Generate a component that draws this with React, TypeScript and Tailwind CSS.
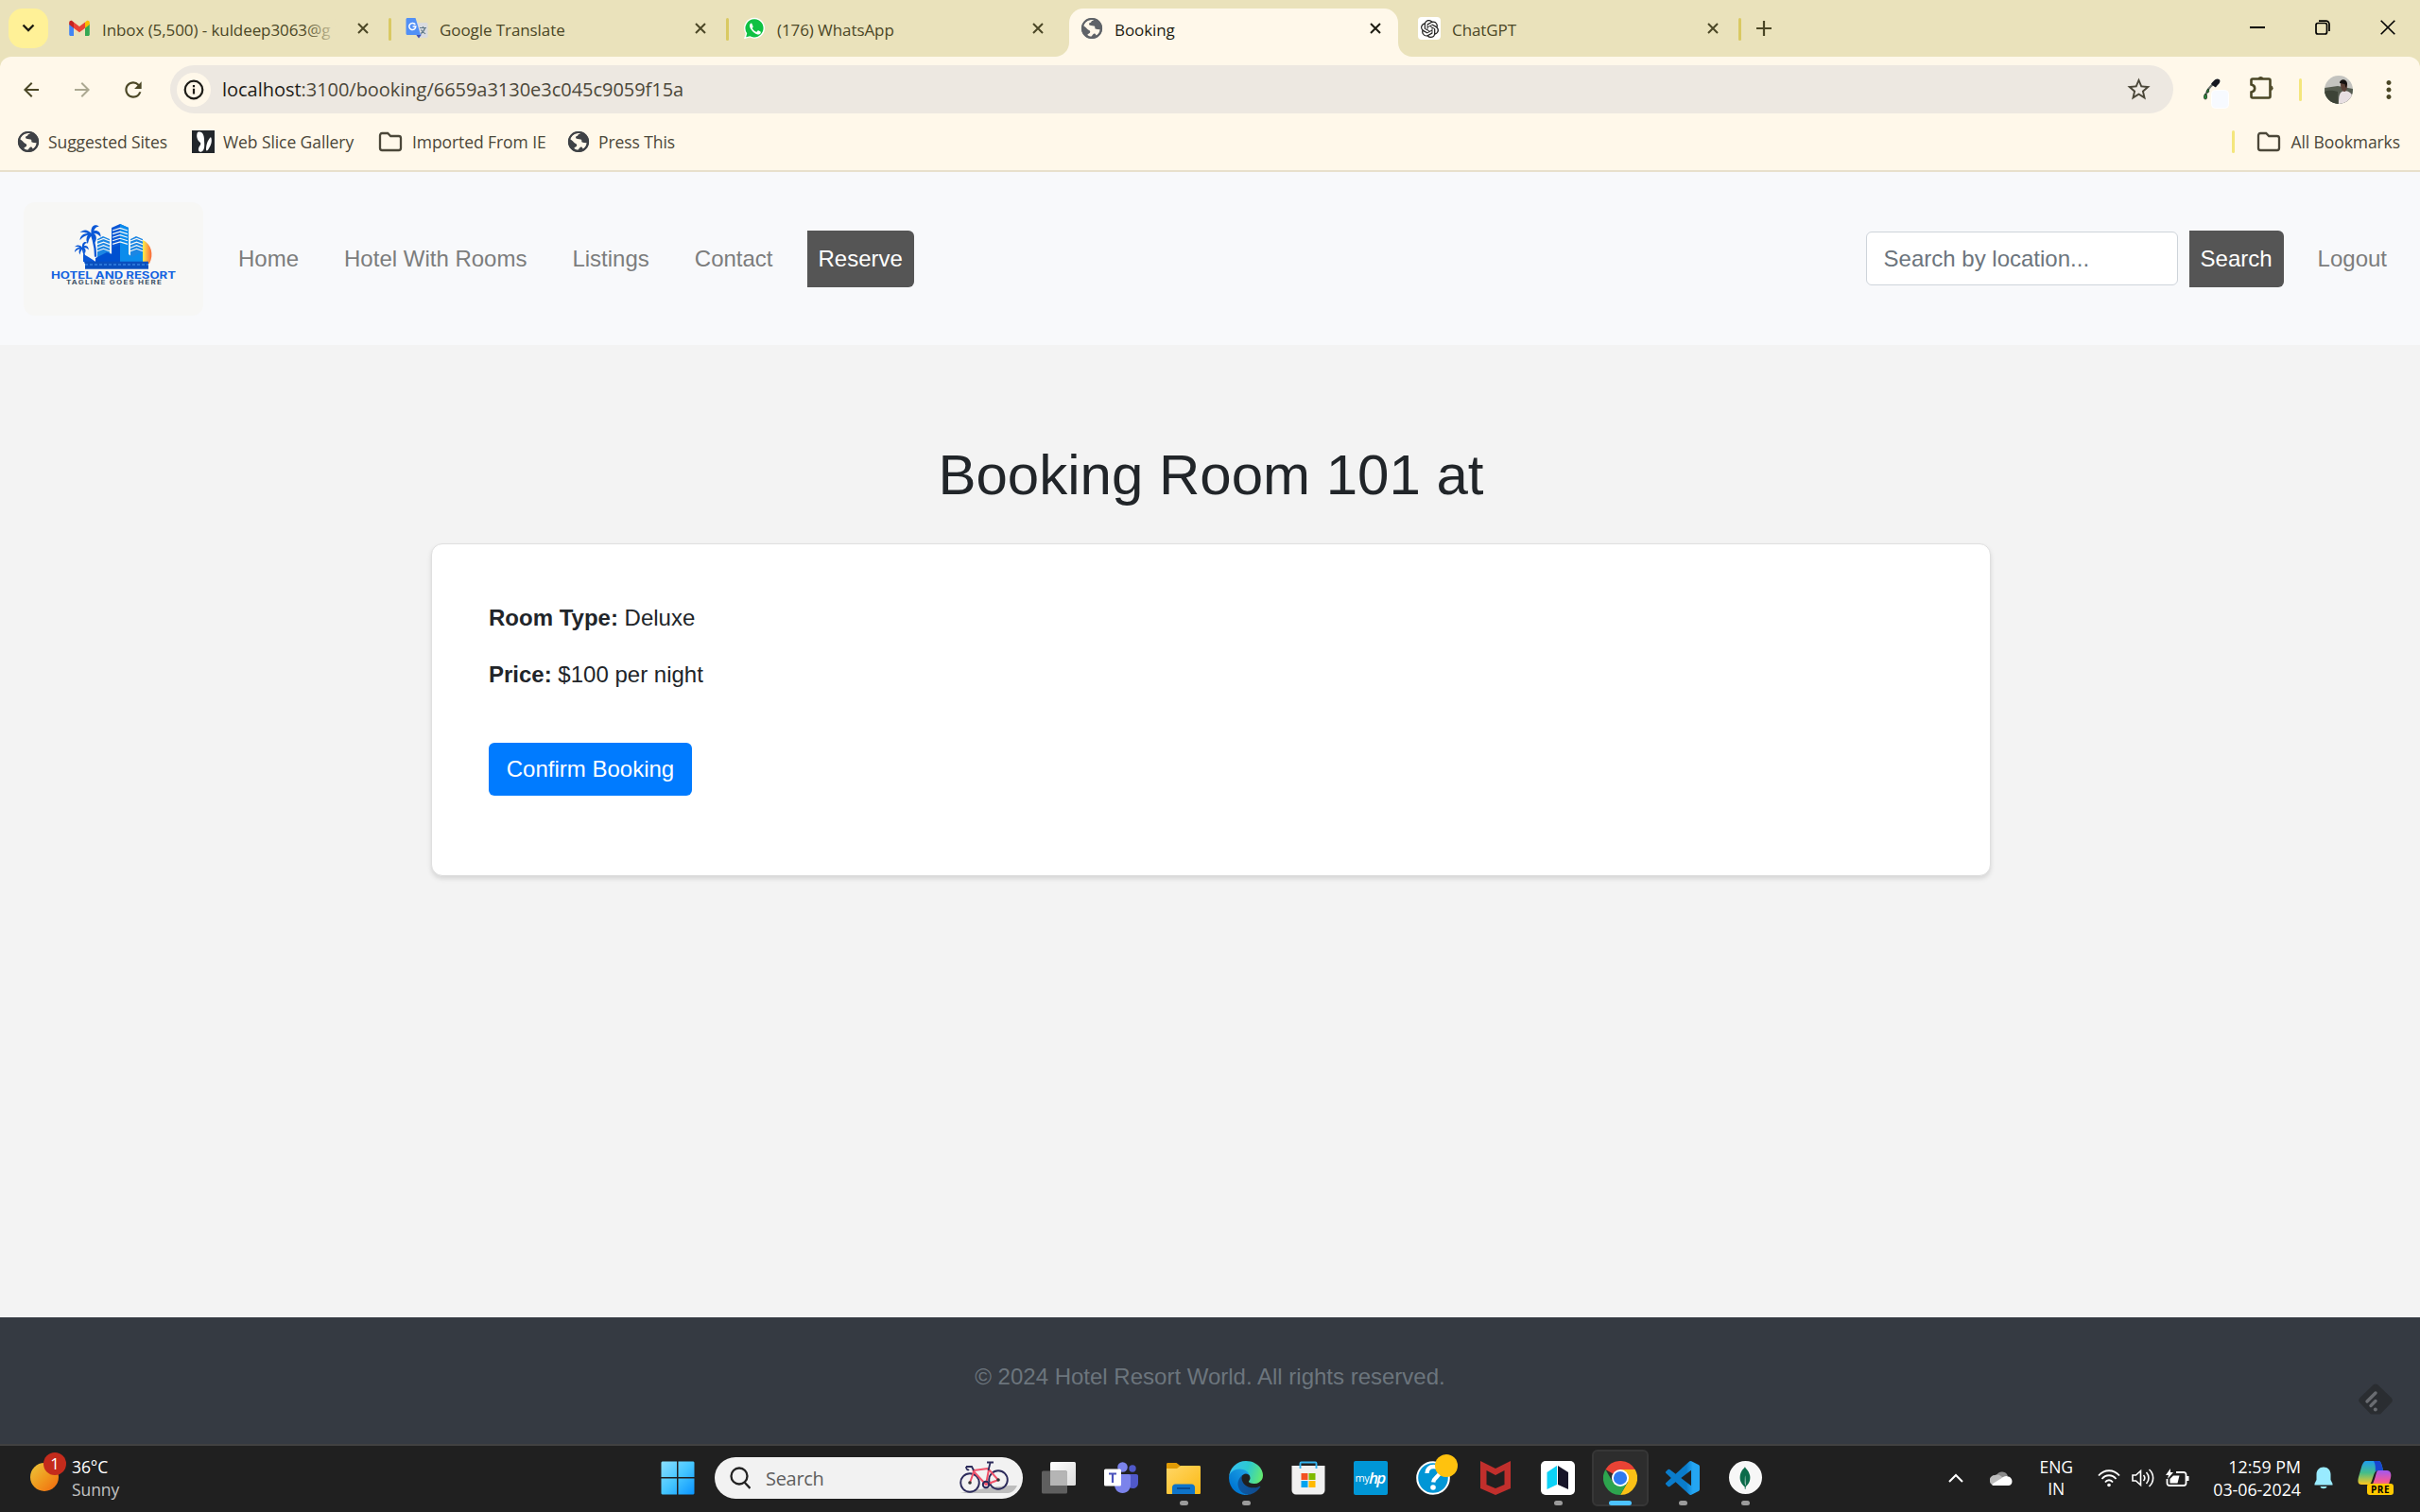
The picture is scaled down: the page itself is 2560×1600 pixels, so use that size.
import React from "react";
import { SiOpenai, SiMongodb } from "react-icons/si";
import {
  MdArrowBack,
  MdArrowForward,
  MdRefresh,
  MdStarBorder,
  MdMoreVert,
} from "react-icons/md";

/* ---------- Browser icons ---------- */

function Globe({ color, land, size = 24 }: { color: string; land: string; size?: number }) {
  return (
    <svg width={size} height={size} viewBox="0 0 24 24" className="shrink-0">
      <circle cx="12" cy="12" r="11" fill={color} />
      <path
        d="M13 3.2c-1.4.4-2.6 1-2.6 2.2 0 1-1.8.8-2 2-.1 1.300.9 1.700 2.200 1.700h3.200c1.200 0 1.400 1 1.400 2 0 1.300 1.400 1 2.600 1h2.900c.2 2.500-.8 5-2.900 6.600-.9-.6-.9-1.700-2.100-1.700-1.200 0-1.600.9-2.600 2.900-.2.500-.8.800-1.500.700-1-.1-2.300-.4-3.300-1 .2-1.500 1.700-1.500 2.300-2.600.5-1 0-2.200-1.200-2.600-1.500-.5-2.600-1.200-3.600-2.300L3 10.500c.3-2.500 1.700-4.700 3.800-6 1.900-1.200 4.100-1.600 6.200-1.300z"
        fill={land}
        transform="rotate(8 12 12)"
      />
      <circle cx="12" cy="12" r="10.200" fill="none" stroke={color} strokeWidth="1.800" />
    </svg>
  );
}

function GmailIcon() {
  return (
    <svg width="24" height="24" viewBox="0 0 24 24" className="shrink-0">
      <path d="M1.200 7v11.500c0 .900.600 1.500 1.500 1.500H6V10z" fill="#4285f4" />
      <path d="M22.800 7v11.500c0 .900-.600 1.500-1.500 1.500H18V10z" fill="#34a853" />
      <path d="M18 5.500 19.500 4.200c1.300-1 3.300-.2 3.300 1.700V8L18 11.700z" fill="#fbbc04" />
      <path d="M6 5.500 12 10l6-4.500v6.200l-6 4.500-6-4.500z" fill="#ea4335" />
      <path d="M6 5.500 4.500 4.200C3.200 3.200 1.200 4 1.200 5.900V8L6 11.700z" fill="#c5221f" />
    </svg>
  );
}

function TranslateIcon() {
  return (
    <svg width="24" height="24" viewBox="0 0 24 24" className="shrink-0">
      <path d="M11 6h11c.8 0 1.500.7 1.500 1.500v13c0 .8-.7 1.500-1.500 1.500h-7.500z" fill="#dadce0" />
      <path d="M15 11.500h7M18.500 10v1.500M20.500 11.500c-.7 3-2.600 5-4.500 6M16.500 13.500c1 2 2.600 3.400 4.600 4.300" stroke="#607988" strokeWidth="1.200" fill="none" />
      <path d="m11 18.500 6 0-3 4z" fill="#3f51b5" />
      <path d="M2 1h8.500L16 19H2C1.200 19 .5 18.300.5 17.500v-15C.5 1.700 1.200 1 2 1z" fill="#5290f5" />
      <path d="M10.300 8.100A3.500 3.500 0 1 0 10.800 10H7.600" stroke="#fff" strokeWidth="1.500" fill="none" />
    </svg>
  );
}

function WhatsAppIcon() {
  return (
    <svg width="24" height="24" viewBox="0 0 24 24" className="shrink-0">
      <path d="M12.200.8a11 11 0 0 0-9.500 16.600L1 23.200l6-1.600A11 11 0 1 0 12.200.8z" fill="#fff" />
      <path d="M12.200 2.200a9.600 9.600 0 0 0-8 15l-1 4 4.100-1A9.600 9.600 0 1 0 12.200 2.200z" fill="#0fc143" />
      <path d="M8.700 6.600c-.6 0-1.700.9-1.700 2.600s1.300 3.600 1.700 4c.3.400 2.500 3.900 6 5.100 2 .7 3.800-.5 4-1.400.2-.8.100-1.200-.1-1.400l-2.300-1.200c-.4-.1-.6 0-.8.300l-.9 1.100c-.2.200-.4.200-.7.100-2.200-.9-3.400-2.600-4-3.600-.2-.4 0-.6.500-1.200.3-.4.3-.6.200-.9l-1-2.500c-.2-.6-.4-1-.9-1z" fill="#fff" />
    </svg>
  );
}

function CloseX({ color = "#4b4726" }: { color?: string }) {
  return (
    <svg width="12" height="12" viewBox="0 0 12 12" className="shrink-0">
      <path d="M1 1l10 10M11 1 1 11" stroke={color} strokeWidth="2" />
    </svg>
  );
}

function Folder() {
  return (
    <svg width="26" height="22" viewBox="0 0 26 22" fill="none" className="shrink-0">
      <path d="M2 4.500C2 3 2.800 2 4.200 2h6l3 3h8.600C23.200 5 24 6 24 7.300v10.400c0 1.300-.8 2.300-2.200 2.300H4.200C2.800 20 2 19 2 17.700z" stroke="#4b4739" strokeWidth="2.300" />
    </svg>
  );
}

function TabFlare({ flip = false }: { flip?: boolean }) {
  return (
    <svg width="15" height="15" viewBox="0 0 15 15" className={flip ? "absolute bottom-0 -right-[15px] -scale-x-100" : "absolute bottom-0 -left-[15px]"}>
      <path d="M15 0v15H0C8.300 15 15 8.300 15 0z" fill="#fff8ea" />
    </svg>
  );
}

/* ---------- Browser chrome ---------- */

type TabProps = { icon: React.ReactNode; title: string; active?: boolean; divider?: boolean; fade?: boolean };

function Tab({ icon, title, active, divider, fade }: TabProps) {
  return (
    <div className="flex h-[51px] w-[357px] shrink-0">
      <div className={active ? "relative flex h-full w-[348px] items-center rounded-t-[15px] bg-[#fff8ea] pb-[9px] pl-3" : "relative flex h-full w-[348px] items-center pb-[9px] pl-3"}>
        {active && <TabFlare />}
        {active && <TabFlare flip />}
        {icon}
        <span className={`relative ml-3 w-[250px] overflow-hidden whitespace-nowrap pt-[3px] text-[17px] leading-6 tracking-[-0.08px] ${active ? "text-[#1d1c12]" : "text-[#4b4726]"}`}>
          {title}
          {fade && <span className="absolute inset-y-0 right-0 w-9 bg-gradient-to-r from-transparent to-[#eae2bb]" />}
        </span>
        <span className="ml-5">
          <CloseX color={active ? "#1d1c12" : "#4b4726"} />
        </span>
      </div>
      {divider && <div className="mt-[10px] ml-[3px] h-6 w-[3px] rounded-full bg-[#d9c962]" />}
    </div>
  );
}

function TabStrip() {
  return (
    <div className="flex h-[60px] items-end bg-[#eae2bb]">
      <div className="mb-[9px] ml-[9px] flex h-[42px] w-[42px] items-center justify-center rounded-[15px] bg-[#fff197]">
        <svg width="14" height="10" viewBox="0 0 14 10" fill="none">
          <path d="M1.500 1.500 7 7l5.500-5.500" stroke="#1d1c12" strokeWidth="2.400" />
        </svg>
      </div>
      <div className="ml-[9px] flex">
        <Tab icon={<GmailIcon />} title="Inbox (5,500) - kuldeep3063@g" divider fade />
        <Tab icon={<TranslateIcon />} title="Google Translate" divider />
        <Tab icon={<WhatsAppIcon />} title="(176) WhatsApp" />
        <Tab icon={<Globe color="#5f6368" land="#fff8ea" />} title="Booking" active />
        <Tab
          icon={
            <span className="flex h-6 w-6 shrink-0 items-center justify-center rounded bg-white">
              <SiOpenai size={19} color="#222" />
            </span>
          }
          title="ChatGPT"
          divider
        />
      </div>
      <svg width="16" height="16" viewBox="0 0 16 16" className="mb-[22px] ml-[13px]">
        <path d="M8 0v16M0 8h16" stroke="#4b4726" strokeWidth="2.200" />
      </svg>
      <div className="mr-[26px] mb-[23px] ml-auto flex items-center gap-[53px]">
        <svg width="16" height="16" viewBox="0 0 16 16">
          <path d="M0 8h16" stroke="#000" strokeWidth="2" />
        </svg>
        <svg width="16" height="16" viewBox="0 0 16 16" fill="none" stroke="#000" strokeWidth="1.700">
          <rect x="1" y="3.500" width="11.500" height="11.500" rx="2" />
          <path d="M4 1.200h7.500a3.500 3.500 0 0 1 3.500 3.500V12" />
        </svg>
        <svg width="16" height="16" viewBox="0 0 16 16">
          <path d="m.7.7 14.600 14.600M15.300.7.7 15.300" stroke="#000" strokeWidth="1.600" />
        </svg>
      </div>
    </div>
  );
}

function EyeDropper() {
  return (
    <svg width="28" height="32" viewBox="0 0 28 32">
      <path d="M3 20C4 13 8 8 13 5" stroke="#6b716c" strokeWidth="2.200" fill="none" />
      <path d="M3 16c-2 2-2 6 0 6s2-4 0-6zM6 11c-2 2-2 4-1 4 2 0 2-2 1-4z" fill="#2c8a3c" stroke="#1a3a20" />
      <path d="M11 3.500C13 1 15.500-.500 17.500 1s.500 4.500-2 6.500c-1 1-1.500 2.500-2.500 1.500L9.500 6.500c-1-1 .5-2 1.500-3z" fill="#16181f" />
      <rect x="9.500" y="12.500" width="18" height="19" rx="4" fill="#f7faff" stroke="#fff" />
    </svg>
  );
}

function Puzzle() {
  return (
    <svg width="28" height="28" viewBox="0 0 28 28" fill="none">
      <path d="M9.500 4a3.200 3.200 0 0 1 6 0z" fill="#4b4726" />
      <path d="M23.500 11.200a3.200 3.200 0 0 1 0 6z" fill="#4b4726" />
      <path d="M4 4.500h17c1 0 1.500.5 1.500 1.500v17c0 1-.5 1.500-1.500 1.500H4c-1 0-1.500-.5-1.500-1.500v-4.500c2.500-.5 3.700-2 3.700-4s-1.200-3.500-3.700-4V6c0-1 .5-1.500 1.500-1.500z" stroke="#4b4726" strokeWidth="2.600" />
    </svg>
  );
}

function Avatar() {
  return (
    <svg width="30" height="30" viewBox="0 0 30 30">
      <clipPath id="avatar">
        <circle cx="15" cy="15" r="15" />
      </clipPath>
      <g clipPath="url(#avatar)">
        <rect width="30" height="30" fill="#c3c3bf" />
        <path d="M0 13 14 11l16 3v16H0z" fill="#565c50" />
        <path d="M0 17c5-2 9-1 14 0v13H0z" fill="#3d4337" />
        <path d="M15 30c0-7 0-12 5-14 6 0 10 3 10 9v5z" fill="#e7dfe2" />
        <path d="M17 9c0-3 6-4 7 0 .500 4-1 8-3 8s-4-3-4-8z" fill="#5a4036" />
        <path d="M16 8c0-5 8-5 8 1l-1.500 4-1-4z" fill="#15110f" />
      </g>
    </svg>
  );
}

function Toolbar() {
  return (
    <div className="bg-[#eae2bb]">
      <div className="flex h-[69px] items-center rounded-t-[12px] bg-[#fff8ea] text-[#4b4726]">
        <div className="ml-[21px] flex items-center gap-[30px]">
          <MdArrowBack size={24} />
          <MdArrowForward size={24} className="text-[#aba891]" />
          <MdRefresh size={26} className="-ml-px" />
        </div>
        <div className="ml-[26px] flex h-[51px] w-[2119px] items-center rounded-full bg-[#ede8e1] pl-[7px]">
          <span className="flex h-9 w-9 items-center justify-center rounded-full bg-[#fff8ea]">
            <svg width="22" height="22" viewBox="0 0 22 22" fill="none" stroke="#1d1c17" strokeWidth="2.200">
              <circle cx="11" cy="11" r="9.300" />
              <path d="M11 9.700v5.800M11 6v2.200" />
            </svg>
          </span>
          <span className="ml-3 text-[20px] leading-7 tracking-[-0.03px] text-[#4b4739]">
            <span className="text-[#1d1c17]">localhost</span>:3100/booking/6659a3130e3c045c9059f15a
          </span>
          <MdStarBorder size={29} className="mr-[22px] ml-auto text-[#4b4739]" />
        </div>
        <div className="mt-[9px] ml-[31px]"><EyeDropper /></div>
        <div className="-mt-1 ml-[21px]"><Puzzle /></div>
        <div className="ml-[25px] h-6 w-[3px] rounded-full bg-[#f4e67c]" />
        <div className="ml-[24px]"><Avatar /></div>
        <MdMoreVert size={30} className="ml-[23px]" />
      </div>
      <div className="flex h-[53px] items-center border-b-2 border-[#e8e0cc] bg-[#fff8ea] pb-[9px] text-[17.5px] tracking-[-0.08px] text-[#4b4739]">
        <div className="ml-[18px] flex items-center gap-[9px]">
          <Globe color="#3f4246" land="#fff8ea" />
          <span className="w-[143px]">Suggested Sites</span>
          <span className="flex h-6 w-6 shrink-0 items-center justify-center bg-[#22262b]">
            <svg width="24" height="24" viewBox="0 0 24 24">
              <path d="M6 2c5-2 7 3 7 8 0 3 1 8-1 11-2 3-6 2-5-2 1-3 3-4 2-6-3-2-5-7-3-11zM15 21c0-5 1-10 5-14 2 4 0 9-2 12-1 2-2 3-3 2z" fill="#fff" />
            </svg>
          </span>
          <span className="w-[155px]">Web Slice Gallery</span>
          <Folder />
          <span className="ml-px w-[155px]">Imported From IE</span>
          <Globe color="#3f4246" land="#fff8ea" />
          <span>Press This</span>
        </div>
        <div className="mr-[21px] ml-auto flex items-center">
          <div className="mr-[23px] h-6 w-[3px] rounded-full bg-[#f4e67c]" />
          <Folder />
          <span className="ml-[10px]">All Bookmarks</span>
        </div>
      </div>
    </div>
  );
}

/* ---------- Page ---------- */

function Palm() {
  return (
    <g>
      <path d="M0 0c3 8 5 17 5 27" stroke="#0a57d6" strokeWidth="2.500" fill="none" />
      <path d="M0 0c-4-5-9-5-13-1 4-1 7 0 9 1-5 0-9 3-9 8 3-4 6-5 9-6-2 3-2 7 0 10 1-4 2-7 4-9 2 1 4 4 4 8 3-5 2-9-1-11 3 0 5 1 8 4 0-6-4-8-8-7 1-3 3-5 6-5C4-12-1-8 0 0z" fill="#0a57d6" />
    </g>
  );
}

function Windows({ x, y, w, rows }: { x: number; y: number; w: number; rows: number }) {
  return (
    <g stroke="#f7f7f5" strokeWidth="1.200">
      {Array.from({ length: rows }, (_, i) => (
        <path key={i} d={`M${x} ${y + i * 3.6}l${w / 2} -2.500l${w / 2} 2.500`} fill="none" />
      ))}
    </g>
  );
}

function HotelLogo() {
  return (
    <svg width="190" height="120" viewBox="0 0 190 120" className="shrink-0">
      <defs>
        <linearGradient id="sun" x1="0" x2="1">
          <stop offset="0" stopColor="#fff04a" />
          <stop offset="1" stopColor="#f9663a" />
        </linearGradient>
      </defs>
      <rect width="190" height="120" rx="12" fill="#f7f7f5" />
      <path d="M126 40c9 4 12 15 7 25h-7z" fill="url(#sun)" />
      <path d="m93 27 9-4 9 4v36H93z" fill="#0a57d6" />
      <path d="m102 23 9 4v36h-9z" fill="#0b8cec" />
      <path d="m78 39 6-3 7 3v24H78zM113 39l6-3 7 3v24h-13z" fill="#1c86e3" />
      <Windows x={94} y={30} w={16} rows={5} />
      <Windows x={78} y={41} w={13} rows={4} />
      <Windows x={113} y={41} w={13} rows={4} />
      <path d="M76 63V59l12-6 6 2v-7l8-3v18z" fill="#0050d0" />
      <path d="M102 44l9 5v6l4 3 11-6v11h-24z" fill="#0b8cec" />
      <path d="M63 55c5 2 9 5 13 8H63z" fill="#0a57d6" />
      <g transform="translate(71.500 33) scale(.92)"><Palm /></g>
      <g transform="translate(62 48) scale(.62)"><Palm /></g>
      <rect x="65" y="62.700" width="67" height="8" fill="#0a4fbe" />
      <path d="M65 66h67" stroke="#4b9cf0" strokeDasharray="3 2" />
      <text x="29" y="80.500" textLength="132" lengthAdjust="spacingAndGlyphs" className="fill-[#1463e0] font-['Inter'] text-[10px] font-bold">HOTEL AND RESORT</text>
      <text x="45" y="86.900" textLength="102" lengthAdjust="spacingAndGlyphs" className="fill-[#3d4f63] font-['Inter'] text-[6.300px] font-bold tracking-[1px]">TAGLINE GOES HERE</text>
    </svg>
  );
}

function NavLink({ children }: { children: React.ReactNode }) {
  return <a className="px-3 text-[#7c7d7d]">{children}</a>;
}

function NavBar() {
  return (
    <nav className="flex h-[183px] items-center bg-[#f8f9fb] font-['Liberation_Sans',sans-serif] text-[24px] leading-9">
      <div className="ml-[25px]"><HotelLogo /></div>
      <div className="ml-[25px] flex items-center gap-6">
        <NavLink>Home</NavLink>
        <NavLink>Hotel With Rooms</NavLink>
        <NavLink>Listings</NavLink>
        <NavLink>Contact</NavLink>
        <a className="flex h-[60px] items-center rounded-r-md bg-[#555] px-3 text-white">Reserve</a>
      </div>
      <div className="mr-[35px] ml-auto flex items-center">
        <div className="flex h-[57px] w-[330px] items-center rounded-md border border-[#ced4da] bg-white pl-[18px] text-[#6c757d]">
          Search by location...
        </div>
        <div className="ml-3 flex h-[60px] w-[100px] items-center justify-center rounded-r-md bg-[#555] text-white">Search</div>
        <a className="ml-9 text-[#7c7d7d]">Logout</a>
      </div>
    </nav>
  );
}

function BookingPage() {
  return (
    <main className="flex h-[1029px] flex-col items-center bg-[#f3f3f3] pl-[2px] font-['Liberation_Sans',sans-serif] text-[24px] leading-9 text-[#212529]">
      <h1 className="mt-[102px] text-[60px] leading-[72px]">Booking Room 101 at</h1>
      <section className="mt-[36px] flex h-[352px] w-[1650px] flex-col items-start rounded-xl border border-[#dfdfdf] bg-white px-[60px] pt-[60px] shadow-[0_3px_5px_rgba(0,0,0,0.12)]">
        <p><strong>Room Type:</strong> Deluxe</p>
        <p className="mt-6"><strong>Price:</strong> $100 per night</p>
        <button className="mt-[54px] h-14 w-[215px] rounded-md bg-[#007bff] text-white">Confirm Booking</button>
      </section>
    </main>
  );
}

function Footer() {
  return (
    <footer className="relative flex h-[134px] justify-center bg-[#353a42] pt-[45px] font-['Liberation_Sans',sans-serif] text-[24px] leading-9 text-[#6c757d]">
      © 2024 Hotel Resort World. All rights reserved.
      <svg width="36" height="34" viewBox="0 0 36 34" className="absolute top-[70px] right-[29px]">
        <path d="M15.500 1.500a4 4 0 0 1 5 0L34.500 15a4 4 0 0 1 0 5.500L23 32.500H13L1.500 20.500a4 4 0 0 1 0-5.500z" fill="#2a2d31" />
        <path d="m9 19 9-9M13 23.500l5-5" stroke="#696c71" strokeWidth="3.400" strokeLinecap="round" />
        <circle cx="17.800" cy="27.500" r="2" fill="#696c71" />
      </svg>
    </footer>
  );
}

/* ---------- Taskbar ---------- */

function WindowsLogo() {
  return (
    <svg width="36" height="36" viewBox="0 0 36 36">
      <defs>
        <linearGradient id="win" x1="0" y1="0" x2="1" y2="1">
          <stop offset="0" stopColor="#8be0ff" />
          <stop offset=".5" stopColor="#45c6ff" />
          <stop offset="1" stopColor="#0a94ff" />
        </linearGradient>
      </defs>
      <path d="M1.500.5H17V17H.5V1.500zM18.500.5h16l1 1V17h-17zM.5 18.500H17v17H1.500l-1-1zM18.500 18.500h17v16l-1 1h-16z" fill="url(#win)" />
    </svg>
  );
}

function Bike() {
  return (
    <svg width="64" height="36" viewBox="0 0 64 36" fill="none">
      <path d="M2 34c12-3 44-9 60-8-2 4-5 8-10 8z" fill="#bdbdbd" />
      <g stroke="#2b2a5a" strokeWidth="1.900">
        <circle cx="12" cy="23" r="9.800" />
        <circle cx="42" cy="20" r="9.800" />
      </g>
      <path d="m12 23 5-14M15 10l14 15 13-5-10-11-3 16M16 10l15-2" stroke="#f0526a" strokeWidth="2" />
      <path d="M8 6h6l2 4M8 6c0 3 2 4 3 3M30 1.500h7M33.500 2l-2 8" stroke="#2b2a5a" strokeWidth="1.800" />
      <circle cx="29" cy="25" r="3.200" stroke="#2b2a5a" strokeWidth="2" />
      <circle cx="12" cy="23" r="1.800" fill="#333" />
      <circle cx="42" cy="20" r="1.800" fill="#333" />
    </svg>
  );
}

function TaskView() {
  return (
    <svg width="36" height="36" viewBox="0 0 36 36">
      <defs>
        <linearGradient id="tv" x1="0" y1="0" x2="1" y2="1">
          <stop offset="0" stopColor="#fff" />
          <stop offset="1" stopColor="#dcdcdc" />
        </linearGradient>
      </defs>
      <rect x="9" y="1" width="27" height="25" rx="1.500" fill="url(#tv)" />
      <rect x="0" y="10.500" width="27" height="24" rx="1.500" fill="#5f5f5f" />
      <path d="M9 10.500h16.500c1 0 1.500.5 1.500 1.500v14H9z" fill="#b5b5b5" />
    </svg>
  );
}

function Teams() {
  return (
    <svg width="36" height="36" viewBox="0 0 36 36">
      <circle cx="30" cy="8" r="3.700" fill="#5059c9" />
      <path d="M24 14h10c1.200 0 2 .8 2 2v7c0 4-2.500 6-6 6s-6-3-6-7z" fill="#5059c9" />
      <circle cx="19.500" cy="6.500" r="5.300" fill="#7b83eb" />
      <path d="M12 14h14c1.200 0 2 .8 2 2v9c0 5-3.500 9-8.500 9S11 30 11 25z" fill="#7b83eb" />
      <rect x="0" y="8.500" width="18" height="18" rx="1.500" fill="#fff" />
      <path d="M5 13.500h8M9 13.500v9.500" stroke="#4b53bc" strokeWidth="2.200" />
    </svg>
  );
}

function Explorer() {
  return (
    <svg width="36" height="36" viewBox="0 0 36 36">
      <defs>
        <linearGradient id="fold" x1="0" y1="0" x2="1" y2="1">
          <stop offset="0" stopColor="#ffd767" />
          <stop offset="1" stopColor="#fcb913" />
        </linearGradient>
      </defs>
      <path d="M0 3.500C0 2.500.6 2 1.500 2H10.500L15 5.500V12H0z" fill="#e09b05" />
      <path d="M0 8h11l4-3h19.500c1 0 1.500.5 1.500 1.500v27c0 1-.5 1.500-1.500 1.500h-33C.5 35 0 34.500 0 33.500z" fill="url(#fold)" />
      <path d="M6 35v-7c0-2 1.500-3.500 3.500-3.500h17c2 0 3.500 1.500 3.500 3.500v7z" fill="#0f74c9" />
      <path d="M11 29h14" stroke="#0a4c92" strokeWidth="2" />
    </svg>
  );
}

function Edge() {
  return (
    <svg width="36" height="36" viewBox="0 0 256 256">
      <defs>
        <linearGradient id="e1" x1="60" x2="240" y1="177" y2="177" gradientUnits="userSpaceOnUse">
          <stop offset="0" stopColor="#0c59a4" />
          <stop offset="1" stopColor="#114a8b" />
        </linearGradient>
        <linearGradient id="e2" x1="150" x2="45" y1="100" y2="212" gradientUnits="userSpaceOnUse">
          <stop offset="0" stopColor="#1b9de2" />
          <stop offset=".2" stopColor="#1595df" />
          <stop offset="1" stopColor="#0078d4" />
        </linearGradient>
        <linearGradient id="e3" x1="10" x2="250" y1="50" y2="130" gradientUnits="userSpaceOnUse">
          <stop offset="0" stopColor="#35c1f1" />
          <stop offset=".5" stopColor="#2cc9cf" />
          <stop offset="1" stopColor="#66eb6e" />
        </linearGradient>
      </defs>
      <path d="M231 190.500a93.700 93.700 0 0 1-10.500 4.700 101.900 101.900 0 0 1-35.900 6.500c-47.300 0-88.500-32.600-88.500-74.300a31.500 31.500 0 0 1 16.400-27.300c-42.800 1.800-53.800 46.400-53.800 72.500 0 74 68.100 81.400 82.800 81.400 7.900 0 19.800-2.300 27-4.600l1.300-.4a128.300 128.300 0 0 0 66.600-52.800 4 4 0 0 0-5.400-5.700z" fill="url(#e1)" />
      <path d="M105.700 241.400a79.200 79.200 0 0 1-22.700-21.300 80.700 80.700 0 0 1 29.500-120c3.100-1.500 8.500-4.100 15.600-4a32.400 32.400 0 0 1 25.700 13 31.900 31.900 0 0 1 6.300 18.700c0-.2 24.500-79.600-80-79.600-43.900 0-80 41.700-80 78.200a130.200 130.200 0 0 0 12.100 56 128 128 0 0 0 156.400 67 75.500 75.500 0 0 1-62.800-8z" fill="url(#e2)" />
      <path d="M152.300 148.900c-.8 1-3.300 2.500-3.300 5.600 0 2.600 1.700 5.100 4.700 7.200 14.400 10 41.500 8.700 41.600 8.700a59.600 59.600 0 0 0 30.300-8.400 61.400 61.400 0 0 0 30.400-53c.3-22.400-8-37.300-11.300-43.900C223.500 23.900 177.700 0 128 0A128 128 0 0 0 0 126.200c.5-36.500 36.800-66 80-66 3.500 0 23.500.3 42 10a72.600 72.600 0 0 1 30.900 29.300c6.100 10.600 7.200 24.100 7.200 29.500 0 5.300-2.700 13.300-7.800 19.900z" fill="url(#e3)" />
    </svg>
  );
}

function Store() {
  return (
    <svg width="36" height="36" viewBox="0 0 36 36">
      <path d="M.5 5h35v26c0 2.500-2 4.500-4.500 4.500H5A4.500 4.500 0 0 1 .5 31z" fill="#f1f1f1" />
      <path d="M9.500 8V2.500c0-.6.400-1 1-1h15c.6 0 1 .4 1 1V8" stroke="#35b4f0" strokeWidth="1.900" fill="none" />
      <path d="M10.500 13h7v7h-7z" fill="#f25022" />
      <path d="M18.500 13h7v7h-7z" fill="#7fba00" />
      <path d="M10.500 21h7v7h-7z" fill="#00a4ef" />
      <path d="M18.500 21h7v7h-7z" fill="#ffb900" />
    </svg>
  );
}

function MyHp() {
  return (
    <span className="flex h-9 w-9 items-center justify-center rounded-[2px] bg-[#0096d6] pr-[2px] pb-[2px] font-['Open_Sans'] text-[11px] leading-none tracking-[-0.6px] text-white">
      my<span className="text-[17px] font-semibold italic tracking-[-1.8px]">hp</span>
    </span>
  );
}

function HpHelp() {
  return (
    <span className="relative block h-9 w-9">
      <svg width="36" height="36" viewBox="0 0 36 36">
        <circle cx="18" cy="18" r="16.800" fill="#0096d6" stroke="#fff" strokeWidth="2" />
        <path d="M11.500 13c0-4.500 3-7 7-7 4.500 0 7 2.500 6.500 6.500-.6 4-6 4.500-6.800 10" stroke="#fff" strokeWidth="4.400" fill="none" />
        <circle cx="18" cy="28" r="2.800" fill="#fff" />
      </svg>
      <span className="absolute -top-[7px] -right-[8px] h-6 w-6 rounded-full bg-[#ffc20e]" />
    </span>
  );
}

function Shield() {
  return (
    <svg width="32" height="36" viewBox="0 0 32 36">
      <path d="M0 0 16 8 32 0v29l-16 7-16-7zM6.500 10v15l9.500 4 9.500-4V10L16 15z" fill="#c12f2c" fillRule="evenodd" />
    </svg>
  );
}

function Mirror() {
  return (
    <svg width="36" height="36" viewBox="0 0 36 36">
      <rect width="36" height="36" rx="5" fill="#fff" />
      <path d="M6.500 12 17 5v20L6.500 30z" fill="#0cd2f7" />
      <path d="m18 5 11 7v18l-11-5z" fill="#171528" />
    </svg>
  );
}

function Chrome() {
  return (
    <svg width="36" height="36" viewBox="0 0 48 48">
      <path d="M24 24 3.200 12A24 24 0 0 1 44.800 12z" fill="#ea4335" />
      <path d="M44.800 12A24 24 0 0 1 24 48l10.400-18L24 12z" fill="#fbc116" />
      <path d="M3.200 12A24 24 0 0 0 24 48l10.400-18L24 24l-10.400 6z" fill="#2da44e" />
      <path d="M24 12h20.800L34.400 30z" fill="#fbc116" />
      <circle cx="24" cy="24" r="12" fill="#fff" />
      <circle cx="24" cy="24" r="9.500" fill="#2f7af0" />
    </svg>
  );
}

function VsCode() {
  return (
    <svg width="36" height="36" viewBox="0 0 24 24">
      <defs>
        <linearGradient id="vsc" x1="0" x2="1">
          <stop offset=".6" stopColor="#0a7ccb" />
          <stop offset=".8" stopColor="#24a5f2" />
        </linearGradient>
      </defs>
      <path d="M23.150 2.587L18.210.21a1.494 1.494 0 0 0-1.705.29l-9.460 8.630-4.120-3.128a.999.999 0 0 0-1.276.057L.327 7.261A1 1 0 0 0 .326 8.740L3.899 12 .326 15.260a1 1 0 0 0 .001 1.479L1.650 17.940a.999.999 0 0 0 1.276.057l4.120-3.128 9.460 8.630a1.492 1.492 0 0 0 1.704.290l4.942-2.377A1.500 1.500 0 0 0 24 20.060V3.939a1.500 1.500 0 0 0-.850-1.352zm-5.146 14.861L10.826 12l7.178-5.448v10.896z" fill="url(#vsc)" />
    </svg>
  );
}

function TaskItem({ children, state }: { children: React.ReactNode; state?: "open" | "active" }) {
  return (
    <div className="flex h-full w-[66px] justify-center">
      <div className={state === "active" ? "relative mt-1 flex h-[60px] w-[60px] justify-center rounded-md border-2 border-[#373737] bg-[#2d2d2d] pt-[10px]" : "relative flex w-[60px] justify-center pt-4"}>
        {children}
        {state === "active" && <span className="absolute -bottom-px h-[5px] w-6 rounded-full bg-[#4cc2ff]" />}
        {state === "open" && <span className="absolute top-[58px] h-[5px] w-[9px] rounded-full bg-[#9b9b9b]" />}
      </div>
    </div>
  );
}

function Tray() {
  return (
    <div className="mr-[30px] ml-auto flex h-[68px] items-center text-white">
      <svg width="16" height="10" viewBox="0 0 16 10" fill="none" className="mr-[28px]">
        <path d="m1 9 7-7 7 7" stroke="#fff" strokeWidth="2" />
      </svg>
      <svg width="24" height="18" viewBox="0 0 24 18" className="mr-[27px]">
        <path d="M7 6a6.500 6.500 0 0 1 12 1l-9 5z" fill="#8b8b8b" />
        <path d="M5 17A5 5 0 0 1 5.500 6c4-1.500 6 1 10 4L7 17z" fill="#bcbcbc" />
        <path d="M2 16c2-2 6-4 10-6.500 2-2 5-3 7-2 5 0 6.500 8.500 1 9.500H5c-1 0-2 0-3-1z" fill="#fff" />
      </svg>
      <div className="w-[38px] text-center text-[17.500px] leading-[23px] tracking-[-0.1px]">
        <div>ENG</div>
        <div>IN</div>
      </div>
      <svg width="24" height="20" viewBox="0 0 24 20" fill="none" stroke="#fff" strokeWidth="1.800" className="ml-[25px]">
        <path d="M1 7.500c6-7 16-7 22 0M4.500 11c4-5 11-5 15 0M8 14.500c2-3 6-3 8 0" />
        <circle cx="12" cy="17.500" r="1.800" fill="#fff" stroke="none" />
      </svg>
      <svg width="24" height="20" viewBox="0 0 24 20" fill="none" stroke="#fff" strokeWidth="1.600" className="ml-3">
        <path d="M1 7v6h3.500l5 4.500v-15L4.500 7zM12.500 7c1.600 1.800 1.600 4.200 0 6M15.500 4c3.300 3.500 3.300 8.500 0 12M18.500 1c5.500 5 5.500 13 0 18" />
      </svg>
      <svg width="25" height="20" viewBox="0 0 25 20" fill="none" className="ml-3">
        <path d="M11 4h8a2.500 2.500 0 0 1 2.500 2.500v9A2.500 2.500 0 0 1 19 18H4a2.500 2.500 0 0 1-2.500-2.500V11" stroke="#fff" strokeWidth="1.800" />
        <path d="M8 7.500h6.500L12.500 15.500H4.500V11zM22 8h2.500v5H22zM5 0 0 7h3l-1 4 6-7H5z" fill="#fff" />
      </svg>
      <div className="ml-[25px] text-right text-[17.800px] leading-6">
        <div>12:59 PM</div>
        <div>03-06-2024</div>
      </div>
      <svg width="20" height="24" viewBox="0 0 20 24" className="ml-[14px]">
        <path d="M10 .5c4.500 0 7.500 3.500 7.500 7.500v6l2 4v1.500H.5V18l2-4V8c0-4 3-7.500 7.500-7.500zM6.500 21h7c-.5 3-6.500 3-7 0z" fill="#99ebff" />
      </svg>
      <div className="relative ml-[26px]">
        <svg width="36" height="36" viewBox="0 0 36 36">
          <defs>
            <linearGradient id="cp1" x1="0" y1="0" x2="0" y2="1">
              <stop offset="0" stopColor="#1f9df0" />
              <stop offset=".5" stopColor="#45bd8a" />
              <stop offset="1" stopColor="#ffc81e" />
            </linearGradient>
            <linearGradient id="cp2" x1="0" y1="0" x2="0" y2="1">
              <stop offset="0" stopColor="#a258f0" />
              <stop offset=".6" stopColor="#f0589c" />
              <stop offset="1" stopColor="#f98a4a" />
            </linearGradient>
          </defs>
          <path d="M9 0h13c2.500 0 3.500 3 5 10h-5c-3 0-4 2-5 5l-2 6c-.8 2.500-2 4-4 4H4c-4 0-4-4-3-8L4.500 5C6 1.500 7 0 9 0z" fill="url(#cp1)" />
          <path d="M17 0h5c2.500 0 3.500 3 5 10h-5c-1.500 0-2.500.5-3.300 1.600C19 7 19 3 17 0z" fill="#1746d0" />
          <path d="M22 10h9c4 0 5 4 4 8l-3 10H10c5 0 6-3 8-9s2-9 4-9z" fill="url(#cp2)" />
        </svg>
        <span className="absolute right-[-2px] bottom-0 flex h-[12px] w-[28px] items-center justify-center rounded-[3px] bg-[#fdc800] text-[10px] font-bold leading-none tracking-[0.5px] text-black">PRE</span>
      </div>
    </div>
  );
}

function Taskbar() {
  return (
    <div className="flex h-[72px] border-t-2 border-[#414141] bg-[#202020]">
      <div className="flex w-[684px] shrink-0 items-start pt-[10px] pl-8">
        <div className="relative mt-[8px] h-[30px] w-[30px] rounded-full bg-gradient-to-br from-[#e9c63a] via-[#f09a1e] to-[#f0640c]">
          <span className="absolute -top-[11px] -right-[8px] flex h-6 w-6 items-center justify-center rounded-full bg-[#c42b1c] text-[17px] text-white">1</span>
        </div>
        <div className="ml-[14px] text-[17.500px] leading-6 tracking-[-0.1px] text-white">
          <div>36°C</div>
          <div className="text-[#c4c4c4]">Sunny</div>
        </div>
      </div>
      <TaskItem><WindowsLogo /></TaskItem>
      <div className="mt-3 ml-[6px] flex h-11 w-[326px] items-center rounded-full bg-[#f2f2f2] pl-4">
        <svg width="22" height="24" viewBox="0 0 22 24" fill="none" stroke="#222" strokeWidth="2.300">
          <circle cx="10" cy="10" r="8.500" />
          <path d="m15.500 16.500 6 6.500" />
        </svg>
        <span className="ml-4 w-[204px] pt-px text-[20px] tracking-[-0.3px] text-[#5e5e5e]">Search</span>
        <Bike />
      </div>
      <div className="ml-[5px] flex">
        <TaskItem><TaskView /></TaskItem>
        <TaskItem><Teams /></TaskItem>
        <TaskItem state="open"><Explorer /></TaskItem>
        <TaskItem state="open"><Edge /></TaskItem>
        <TaskItem><Store /></TaskItem>
        <TaskItem><MyHp /></TaskItem>
        <TaskItem><HpHelp /></TaskItem>
        <TaskItem><Shield /></TaskItem>
        <TaskItem state="open"><Mirror /></TaskItem>
        <TaskItem state="active"><Chrome /></TaskItem>
        <TaskItem state="open"><VsCode /></TaskItem>
        <TaskItem state="open">
          <span className="flex h-[35px] w-[35px] items-center justify-center rounded-full bg-[#f7f7f7]">
            <SiMongodb size={24} color="#0b6b4a" />
          </span>
        </TaskItem>
      </div>
      <Tray />
    </div>
  );
}

export default function App() {
  return (
    <div className="flex h-[1600px] w-[2560px] flex-col overflow-hidden font-['Open_Sans','Noto_Sans',sans-serif]">
      <TabStrip />
      <Toolbar />
      <NavBar />
      <BookingPage />
      <Footer />
      <Taskbar />
    </div>
  );
}
